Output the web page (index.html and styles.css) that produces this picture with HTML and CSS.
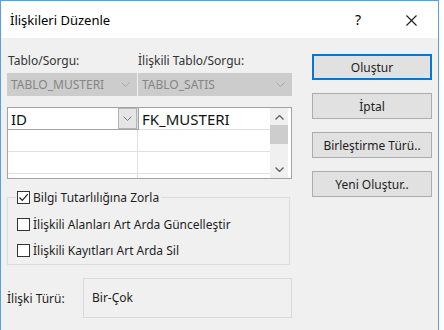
FILE: index.html
```html
<!DOCTYPE html>
<html lang="tr">
<head>
<meta charset="utf-8">
<link rel="stylesheet" href="styles.css">
</head>
<body>
<div class="window">
  <div class="titlebar">
    <span class="title">İlişkileri Düzenle</span>
    <span class="help">?</span>
    <span class="close"><svg width="11" height="11" viewBox="0 0 11 11"><path d="M0.5 0.5 L10.5 10.5 M10.5 0.5 L0.5 10.5" stroke="#1a1a1a" stroke-width="1.1" fill="none"/></svg></span>
  </div>
  <div class="content">
    <div class="left">
      <div class="labels">
        <span class="lbl lbl1">Tablo/Sorgu:</span>
        <span class="lbl lbl2">İlişkili Tablo/Sorgu:</span>
      </div>
      <div class="combos">
        <div class="combo combo1"><span>TABLO_MUSTERI</span><svg class="chev" width="9" height="5" viewBox="0 0 9 5"><path d="M0.5 0.5 L4.5 4.5 L8.5 0.5" stroke="#a8a8a8" fill="none"/></svg></div>
        <div class="combo combo2"><span>TABLO_SATIS</span><svg class="chev" width="9" height="5" viewBox="0 0 9 5"><path d="M0.5 0.5 L4.5 4.5 L8.5 0.5" stroke="#a8a8a8" fill="none"/></svg></div>
      </div>
      <div class="grid">
        <div class="cols">
          <div class="row">
            <div class="cell c1 focus"><span>ID</span><span class="dd"><svg width="9" height="5" viewBox="0 0 9 5"><path d="M0.5 0.5 L4.5 4.5 L8.5 0.5" stroke="#7a7a7a" fill="none"/></svg></span></div>
            <div class="cell c2"><span>FK_MUSTERI</span></div>
          </div>
          <div class="row"><div class="cell c1"></div><div class="cell c2"></div></div>
          <div class="row"><div class="cell c1"></div><div class="cell c2"></div></div>
          <div class="row partial"><div class="cell c1"></div><div class="cell c2"></div></div>
        </div>
        <div class="scrollbar">
          <svg class="arrow" width="9" height="5" viewBox="0 0 9 5"><path d="M0.5 4.5 L4.5 0.5 L8.5 4.5" stroke="#606060" stroke-width="1.3" fill="none"/></svg>
          <div class="thumb"></div>
          <div class="track"></div>
          <svg class="arrow" width="9" height="5" viewBox="0 0 9 5"><path d="M0.5 0.5 L4.5 4.5 L8.5 0.5" stroke="#606060" stroke-width="1.3" fill="none"/></svg>
        </div>
      </div>
      <fieldset class="group">
        <legend class="legend"><span class="cb checked"><svg width="11" height="11" viewBox="0 0 11 11"><path d="M1.5 5.5 L4.3 8.3 L9.8 2.2" stroke="#202020" stroke-width="1.2" fill="none"/></svg></span><span class="cbtext">Bilgi Tutarlılığına Zorla</span></legend>
        <div class="item"><span class="cb"></span><span class="cbtext">İlişkili Alanları Art Arda Güncelleştir</span></div>
        <div class="item"><span class="cb"></span><span class="cbtext">İlişkili Kayıtları Art Arda Sil</span></div>
      </fieldset>
      <div class="reltype">
        <span class="rellbl">İlişki Türü:</span>
        <div class="relbox">Bir-Çok</div>
      </div>
    </div>
    <div class="buttons">
      <div class="btn default">Oluştur</div>
      <div class="btn">İptal</div>
      <div class="btn">Birleştirme Türü..</div>
      <div class="btn">Yeni Oluştur..</div>
    </div>
  </div>
</div>
</body>
</html>
```
FILE: styles.css
```css
html, body {
  margin: 0;
  padding: 0;
  background: #ffffff;
}
body {
  width: 444px;
  height: 330px;
  overflow: hidden;
  font-family: "Noto Sans", "Open Sans", sans-serif;
  font-size: 12px;
  color: #1e1e1e;
}
.window {
  width: 437px;
  height: 329px;
  border: 1px solid #5b9ee0;
  border-bottom: none;
  background: #f0f0f0;
}
.titlebar {
  height: 37px;
  background: #ffffff;
  display: flex;
  align-items: center;
  font-size: 13px;
  color: #000;
}
.title {
  margin-left: 9px;
  flex: 1;
}
.help {
  width: 10px;
  margin-right: 41px;
  font-size: 14px;
}
.close {
  display: flex;
  margin-right: 21px;
  margin-top: 1px;
}
.content {
  display: flex;
  padding: 15px 0 0 6px;
}
.left {
  width: 285px;
  display: flex;
  flex-direction: column;
}
.labels {
  display: flex;
  height: 16px;
  line-height: 16px;
  color: #333;
}
.lbl1 { width: 130px; padding-left: 1px; }
.lbl2 { padding-left: 0; }
.combos {
  display: flex;
  margin-top: 4px;
  height: 23px;
}
.combo {
  background: #cccccc;
  display: flex;
  align-items: center;
  justify-content: space-between;
  color: #858585;
  box-sizing: border-box;
  height: 23px;
  padding: 0 7px 0 4px;
}
.combo1 { width: 130px; margin-right: 1px; }
.combo2 { width: 154px; }
.grid {
  margin-top: 11px;
  height: 72px;
  box-sizing: border-box;
  border: 1px solid #a3a3a3;
  background: #ffffff;
  display: flex;
}
.cols {
  width: 262px;
  display: flex;
  flex-direction: column;
}
.row {
  display: flex;
  height: 21px;
  border-bottom: 1px solid #e0e0e0;
  flex-shrink: 0;
}
.row.partial {
  height: 4px;
  border-bottom: none;
}
.cell {
  box-sizing: border-box;
  height: 100%;
  display: flex;
  align-items: center;
  font-size: 15px;
  color: #111;
}
.c1 {
  width: 130px;
  border-right: 1px solid #e0e0e0;
  padding-left: 3px;
  justify-content: space-between;
}
.c2 {
  flex: 1;
  padding-left: 4px;
}
.cell.focus {
  outline: 1px solid #a3a3a3;
}
.dd {
  width: 19px;
  height: 21px;
  box-sizing: border-box;
  background: #e5e5e5;
  border: 1px solid #b4b4b4;
  display: flex;
  align-items: center;
  justify-content: center;
}
.scrollbar {
  width: 18px;
  margin-left: 0;
  background: #f0f0f0;
  display: flex;
  flex-direction: column;
  align-items: center;
}
.scrollbar .arrow {
  margin: 7px 0 5px;
  flex-shrink: 0;
}
.thumb {
  width: 18px;
  height: 19px;
  background: #cdcdcd;
  flex-shrink: 0;
}
.track { flex: 1; }
.scrollbar .arrow:last-child {
  margin: 0 0 6px;
}
.group {
  margin: 11px 0 0;
  padding: 6px 0 1px;
  border: 1px solid #dcdcdc;
  width: 283px;
  box-sizing: border-box;
  min-width: 0;
}
.legend {
  padding: 0 2px 0 1px;
  margin-left: 8px;
  height: 15px;
  display: flex;
  align-items: center;
}
.item {
  height: 26px;
  display: flex;
  align-items: center;
  padding-left: 9px;
}
.cb {
  width: 13px;
  height: 13px;
  box-sizing: border-box;
  border: 1px solid #333333;
  background: #ffffff;
  display: flex;
  align-items: center;
  justify-content: center;
  flex-shrink: 0;
}
.cbtext {
  margin-left: 3px;
  color: #1e1e1e;
}
.reltype {
  margin-top: 13px;
  display: flex;
  align-items: center;
}
.rellbl {
  width: 76px;
  color: #1e1e1e;
}
.relbox {
  width: 209px;
  height: 40px;
  box-sizing: border-box;
  border: 1px solid #dadada;
  display: flex;
  align-items: center;
  padding: 0 0 2px 8px;
}
.buttons {
  margin-left: 20px;
  display: flex;
  flex-direction: column;
  gap: 13px;
  padding-top: 1px;
}
.btn {
  width: 120px;
  height: 26px;
  box-sizing: border-box;
  background: #e1e1e1;
  border: 1px solid #adadad;
  display: flex;
  align-items: center;
  justify-content: center;
  color: #1e1e1e;
}
.btn.default {
  border: 2px solid #0078d7;
}
```
